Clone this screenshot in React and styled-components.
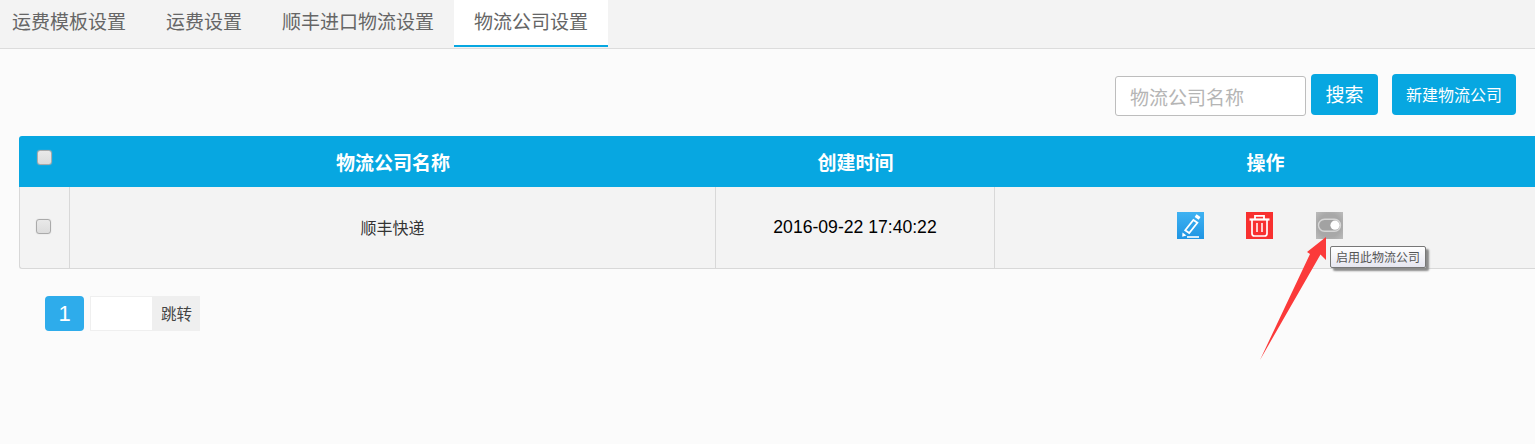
import React from "react";
import styled, { createGlobalStyle } from "styled-components";

const cjk = `"Noto Sans CJK SC", "Liberation Sans", sans-serif`;

const GlobalStyle = createGlobalStyle`
  html, body {
    margin: 0;
    padding: 0;
    background: #fbfbfb;
    font-family: ${cjk};
    overflow: hidden;
  }
`;

const Page = styled.div`
  position: relative;
  width: 1535px;
  height: 444px;
  overflow: hidden;
`;

const Tabs = styled.div`
  display: flex;
  height: 48px;
  padding-left: 12px;
  gap: 40px;
  background: #f3f3f3;
  border-bottom: 1px solid #dcdcdc;
`;

const Tab = styled.div`
  font-size: 19px;
  line-height: 42px;
  height: 47px;
  box-sizing: border-box;
  color: #666;
  white-space: nowrap;
  ${(p) =>
    p.$active &&
    `
    background: #fff;
    margin: 0 -20px;
    padding: 0 20px;
    border-bottom: 2px solid #07a7e1;
  `}
`;

const Toolbar = styled.div`
  display: flex;
  justify-content: flex-end;
  align-items: flex-start;
  padding: 25px 19px 0 0;
  height: 62px;
`;

const SearchInput = styled.input`
  box-sizing: border-box;
  width: 191px;
  height: 40px;
  margin: 2px 5px 0 0;
  padding: 0 14px;
  border: 1px solid #bdbdbd;
  border-radius: 3px;
  background: #fff;
  font-family: ${cjk};
  font-size: 19px;
  outline: none;
  &::placeholder {
    color: #b5b5b5;
    opacity: 1;
  }
`;

const Button = styled.button`
  height: 41px;
  border: 0;
  border-radius: 4px;
  background: #07a7e1;
  color: #fff;
  font-family: ${cjk};
  font-size: ${(p) => p.$size}px;
  width: ${(p) => p.$width}px;
  margin-left: ${(p) => p.$gap || 0}px;
  padding: 0 0 2px;
`;

const Table = styled.table`
  width: 1516px;
  margin-left: 19px;
  border-collapse: separate;
  border-spacing: 0;
  table-layout: fixed;
`;

const HeadCell = styled.th`
  height: 51px;
  padding: 0 0 0 2px;
  background: #07a7e1;
  color: #fff;
  font-size: 19px;
  font-weight: 700;
  text-align: center;
  &:first-child {
    border-radius: 3px 0 0 0;
    text-align: left;
    padding-left: 18px;
    vertical-align: top;
    padding-top: 14px;
    box-sizing: border-box;
  }
`;

const Cell = styled.td`
  height: 82px;
  box-sizing: border-box;
  padding: 0 0 ${(p) => (p.$date ? 0 : 2)}px;
  background: #f3f3f3;
  border-left: 1px solid #d8d8d8;
  border-bottom: 1px solid #d8d8d8;
  text-align: center;
  color: ${(p) => (p.$date ? "#000" : "#333")};
  font-family: ${(p) => (p.$date ? `"Liberation Sans", sans-serif` : cjk)};
  font-size: ${(p) => (p.$date ? "17.6px" : "16px")};
  &:first-child {
    border-radius: 0 0 0 3px;
    text-align: left;
    padding: 0 0 2px 16px;
  }
`;

const Check = styled.span`
  display: block;
  box-sizing: border-box;
  width: 15px;
  height: 15px;
  border: 1px solid #aaa;
  border-radius: 3px;
  background: linear-gradient(#e9e9e9, #dcdcdc);
  box-shadow: 0 0 1px #bbb;
`;

const Actions = styled.div`
  display: flex;
  gap: 42.4px;
  padding: 0 0 2px 182px;
`;

const IconTile = styled.span`
  display: block;
  width: 27px;
  height: 27px;
  background: ${(p) => p.$bg};
  svg {
    display: block;
  }
`;

const Pager = styled.div`
  display: flex;
  align-items: stretch;
  height: 35px;
  margin: 27px 0 0 45px;
`;

const PageNo = styled.div`
  width: 39px;
  border-radius: 4px;
  background: #2eaceb;
  color: #fff;
  font-family: "Liberation Sans", sans-serif;
  font-size: 22px;
  line-height: 35px;
  text-align: center;
`;

const JumpInput = styled.input`
  box-sizing: border-box;
  width: 63px;
  margin-left: 6px;
  border: 1px solid #efefef;
  background: #fff;
  outline: none;
`;

const JumpLabel = styled.div`
  width: 47px;
  background: #efefef;
  color: #444;
  font-size: 15.5px;
  line-height: 35px;
  text-align: center;
`;

const Tooltip = styled.div`
  position: absolute;
  left: 1330px;
  top: 246px;
  box-sizing: border-box;
  width: 96px;
  height: 22px;
  border: 1px solid #777;
  border-radius: 2px;
  background: linear-gradient(#fff, #e6e6f0);
  box-shadow: 3px 3px 2px #8a8a8a;
  color: #555;
  font-size: 12px;
  line-height: 20px;
  text-align: center;
  white-space: nowrap;
`;

const Arrow = styled.svg`
  position: absolute;
  left: 1250px;
  top: 230px;
`;

const EditIcon = () => (
  <svg width="27" height="27" viewBox="0 0 27 27" fill="none">
    <path d="M18.6 3.6 L22.6 6.4" stroke="#fff" strokeWidth="3.2" />
    <path d="M16.4 8 L20.4 10.8 L12.2 21 L8.2 18.2 Z" stroke="#fff" strokeWidth="1.8" />
    <path d="M5.5 20.5 L9.5 23.4 L5.2 24.8 Z" fill="#fff" />
    <path d="M10 25 H22" stroke="#fff" strokeWidth="1.6" />
  </svg>
);

const TrashIcon = () => (
  <svg width="27" height="27" viewBox="0 0 27 27" fill="none" stroke="#fff" strokeWidth="1.5">
    <path d="M3.5 7.5 H23.5" strokeWidth="2.2" />
    <path d="M9 7 V3.8 H18 V7" strokeWidth="1.8" />
    <path d="M6 8 V21.5 Q6 24 8.5 24 H18.5 Q21 24 21 21.5 V8" strokeWidth="1.7" />
    <path d="M11 11 V20 M16 11 V20" />
  </svg>
);

const ToggleIcon = () => (
  <svg width="27" height="27" viewBox="0 0 27 27" fill="none">
    <rect x="2.5" y="7.2" width="22" height="12" rx="6" fill="#a2a2a2" stroke="#d6d6d6" strokeWidth="1.4" />
    <circle cx="19" cy="13.2" r="4.6" fill="#fff" />
  </svg>
);

export default function App() {
  return (
    <Page>
      <GlobalStyle />
      <Tabs>
        <Tab>运费模板设置</Tab>
        <Tab>运费设置</Tab>
        <Tab>顺丰进口物流设置</Tab>
        <Tab $active>物流公司设置</Tab>
      </Tabs>
      <Toolbar>
        <SearchInput placeholder="物流公司名称" />
        <Button $size={19} $width={67}>搜索</Button>
        <Button $size={16} $width={124} $gap={14}>新建物流公司</Button>
      </Toolbar>
      <Table>
        <colgroup>
          <col style={{ width: 50 }} />
          <col style={{ width: 646 }} />
          <col style={{ width: 279 }} />
          <col />
        </colgroup>
        <thead>
          <tr>
            <HeadCell><Check /></HeadCell>
            <HeadCell>物流公司名称</HeadCell>
            <HeadCell>创建时间</HeadCell>
            <HeadCell>操作</HeadCell>
          </tr>
        </thead>
        <tbody>
          <tr>
            <Cell><Check /></Cell>
            <Cell>顺丰快递</Cell>
            <Cell $date>2016-09-22 17:40:22</Cell>
            <Cell>
              <Actions>
                <IconTile $bg="linear-gradient(#3fb2f2, #1f95e3)"><EditIcon /></IconTile>
                <IconTile $bg="#f8302f"><TrashIcon /></IconTile>
                <IconTile $bg="radial-gradient(circle, #a8a8a8 60%, #bcbcbc)"><ToggleIcon /></IconTile>
              </Actions>
            </Cell>
          </tr>
        </tbody>
      </Table>
      <Pager>
        <PageNo>1</PageNo>
        <JumpInput />
        <JumpLabel>跳转</JumpLabel>
      </Pager>
      <Tooltip>启用此物流公司</Tooltip>
      <Arrow width="80" height="135" viewBox="1250 230 80 135">
        <path d="M1326 237 L1326 260 L1320.5 254.5 L1260 360 L1310 254 L1307 252 Z" fill="#fb3a3a" />
      </Arrow>
    </Page>
  );
}
